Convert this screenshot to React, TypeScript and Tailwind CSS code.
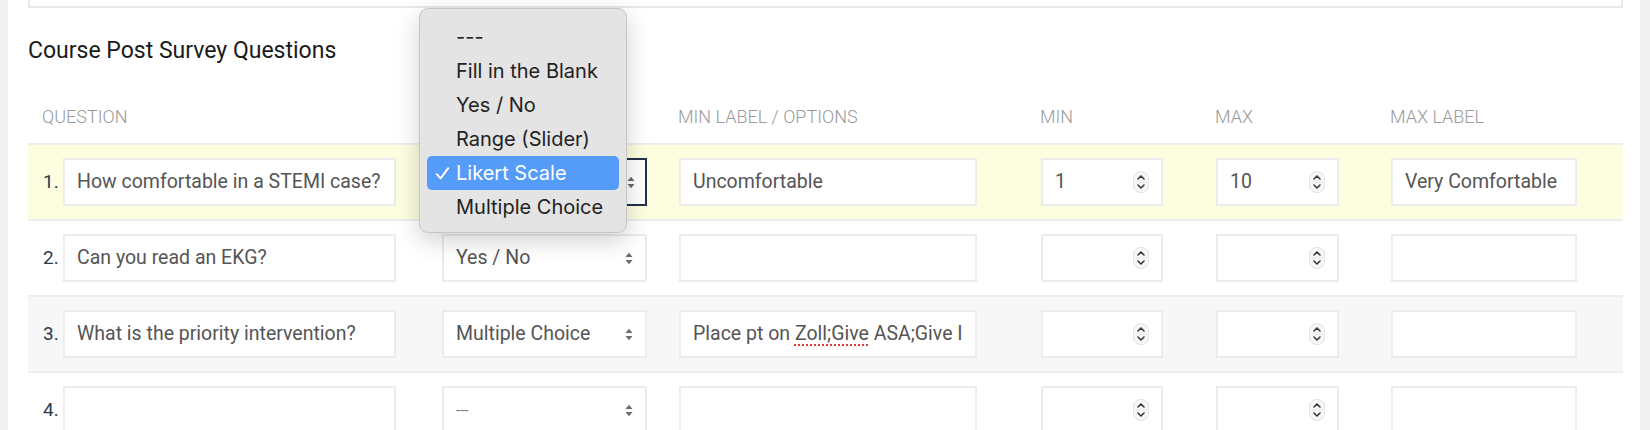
import React from "react";

const font = { fontFamily: "Roboto, 'Liberation Sans', sans-serif" };

function SelectArrows() {
  return (
    <svg width="8" height="13" viewBox="0 0 8 13" className="shrink-0">
      <path d="M0.5 5 L4 0.8 L7.5 5 Z" fill="#6b6b6b" />
      <path d="M0.5 8 L4 12.2 L7.5 8 Z" fill="#6b6b6b" />
    </svg>
  );
}

function Spinner() {
  return (
    <svg width="16" height="22" viewBox="0 0 16 22" className="shrink-0">
      <rect x="0.5" y="0.5" width="15" height="21" rx="7" fill="#f6f6f6" stroke="#e2e2e2" />
      <line x1="2" y1="11" x2="14" y2="11" stroke="#e6e6e6" />
      <path d="M5 8 L8 5 L11 8" fill="none" stroke="#3a3a3a" strokeWidth="1.6" strokeLinecap="round" strokeLinejoin="round" />
      <path d="M5 14 L8 17 L11 14" fill="none" stroke="#3a3a3a" strokeWidth="1.6" strokeLinecap="round" strokeLinejoin="round" />
    </svg>
  );
}

function Check() {
  return (
    <svg width="15" height="15" viewBox="0 0 15 15" className="shrink-0">
      <path d="M1.8 8.2 L5.6 12.4 L13.2 2.2" fill="none" stroke="#ffffff" strokeWidth="2" strokeLinecap="round" strokeLinejoin="round" />
    </svg>
  );
}

type Row = {
  n: string;
  q: string;
  type: string;
  minLabel: React.ReactNode;
  min: string;
  max: string;
  maxLabel: string;
  bg: string;
  focus?: boolean;
};

const rows: Row[] = [
  {
    n: "1.",
    q: "How comfortable in a STEMI case?",
    type: "Likert Scale",
    minLabel: "Uncomfortable",
    min: "1",
    max: "10",
    maxLabel: "Very Comfortable",
    bg: "bg-[#fdfde0]",
    focus: true,
  },
  {
    n: "2.",
    q: "Can you read an EKG?",
    type: "Yes / No",
    minLabel: "",
    min: "",
    max: "",
    maxLabel: "",
    bg: "bg-white",
  },
  {
    n: "3.",
    q: "What is the priority intervention?",
    type: "Multiple Choice",
    minLabel: (
      <span>
        Place pt on{" "}
        <span className="underline decoration-dotted decoration-[#e03c3c] decoration-2 underline-offset-[4px]">
          Zoll;Give
        </span>{" "}
        ASA;Give I
      </span>
    ),
    min: "",
    max: "",
    maxLabel: "",
    bg: "bg-[#f7f7f7]",
  },
  {
    n: "4.",
    q: "",
    type: "---",
    minLabel: "",
    min: "",
    max: "",
    maxLabel: "",
    bg: "bg-white",
  },
];

const inputBase =
  "h-[48px] border-2 border-[#ececec] bg-white flex items-center pl-[12px] pr-[12px] text-[19.5px] text-[#555555] whitespace-nowrap overflow-hidden";

function TableRow({ r }: { r: Row }) {
  return (
    <div className={`h-[76px] border-t-2 border-[#eeeeee] flex items-center pl-[15px] ${r.bg}`}>
      <span className="w-[20px] text-[19px] text-[#2c3a4e]">{r.n}</span>
      <div className={`${inputBase} w-[333px]`}>{r.q}</div>
      <div
        className={
          r.focus
            ? "ml-[46px] w-[205px] h-[48px] border-2 border-[#22314c] bg-white flex items-center justify-between pl-[12px] pr-[10px] text-[19.5px] text-[#555555]"
            : "ml-[46px] w-[205px] h-[48px] border-2 border-[#ececec] bg-white flex items-center justify-between pl-[12px] pr-[12px] text-[19.5px] text-[#555555]"
        }
      >
        <span className={r.focus ? "invisible" : r.type === "---" ? "text-[15px] text-[#777777]" : ""}>
          {r.type}
        </span>
        <SelectArrows />
      </div>
      <div className={`${inputBase} ml-[32px] w-[298px]`}>{r.minLabel}</div>
      <div className={`${inputBase} ml-[64px] w-[122px] justify-between pr-[12px]`}>
        <span>{r.min}</span>
        <Spinner />
      </div>
      <div className={`${inputBase} ml-[53px] w-[123px] justify-between pr-[12px]`}>
        <span>{r.max}</span>
        <Spinner />
      </div>
      <div className={`${inputBase} ml-[52px] w-[186px]`}>{r.maxLabel}</div>
    </div>
  );
}

const menuItems = ["---", "Fill in the Blank", "Yes / No", "Range (Slider)", "Likert Scale", "Multiple Choice"];

export default function App() {
  return (
    <div className="relative w-[1650px] h-[430px] bg-[#f0f0f0] overflow-hidden" style={font}>
      <div className="ml-[8px] w-[1632px] h-[430px] bg-white pl-[20px] pr-[17px]">
        <div className="h-[8px] border-2 border-t-0 border-[#e8e8e8]" />
        <div className="mt-[29px] text-[23px] leading-[28px] text-[#1a1a1a]">Course Post Survey Questions</div>
        <div className="h-[78px] pt-[40px] flex pl-[14px] text-[18px] leading-[24px] font-light text-[#9a9a9a] uppercase">
          <div className="w-[353px]">Question</div>
          <div className="ml-[46px] w-[205px] invisible">Type</div>
          <div className="ml-[32px] w-[298px]">Min Label / Options</div>
          <div className="ml-[64px] w-[122px]">Min</div>
          <div className="ml-[53px] w-[123px]">Max</div>
          <div className="ml-[52px] w-[186px]">Max Label</div>
        </div>
        {rows.map((r) => (
          <TableRow key={r.n} r={r} />
        ))}
      </div>

      <div
        className="absolute left-[419px] top-[8px] w-[208px] h-[225px] rounded-[9px] border border-[#c6c6c6] bg-[#e4e4e4] shadow-[0_8px_24px_rgba(0,0,0,0.18)] pt-[11px]"
        style={{ fontFamily: "Inter, 'Noto Sans', sans-serif" }}
      >
        {menuItems.map((m) =>
          m === "Likert Scale" ? (
            <div
              key={m}
              className="mx-[7px] h-[34px] rounded-[5px] bg-[#559bf8] flex items-center text-[20px] text-white"
            >
              <span className="w-[29px] pl-[8px] flex items-center">
                <Check />
              </span>
              <span>{m}</span>
            </div>
          ) : (
            <div key={m} className="mx-[7px] h-[34px] flex items-center text-[20px] text-[#222222]">
              <span className="w-[29px]" />
              <span>{m}</span>
            </div>
          )
        )}
      </div>
    </div>
  );
}
